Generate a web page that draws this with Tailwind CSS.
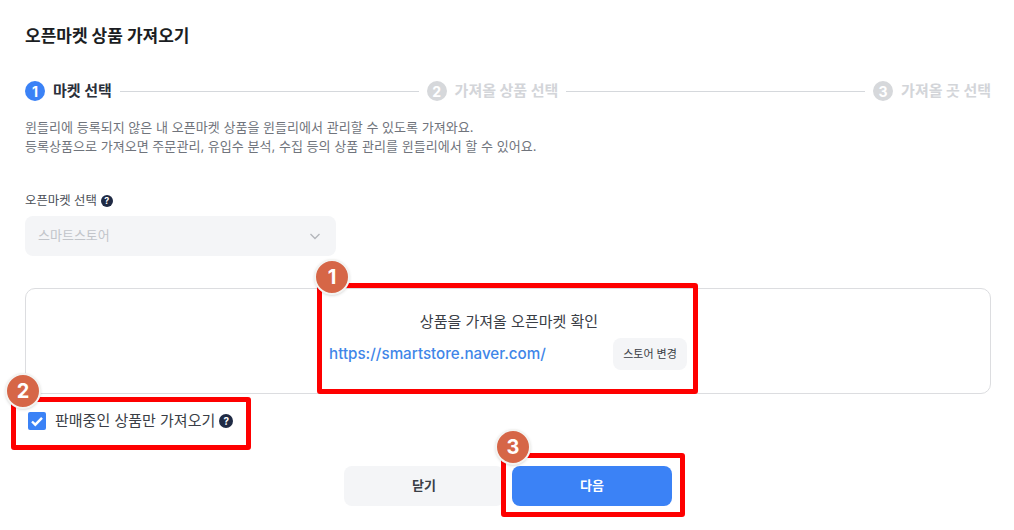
<!DOCTYPE html>
<html lang="ko">
<head>
  <meta charset="UTF-8" />
  <title>오픈마켓 상품 가져오기</title>
  <script src="https://cdn.jsdelivr.net/npm/@tailwindcss/browser@4"></script>
</head>
<body class="bg-white font-['Inter','Noto_Sans_CJK_KR',sans-serif] overflow-hidden">
  <div class="relative w-[1014px] h-[530px] px-[25px] pt-[26px]">
    <h1 class="text-[17px] leading-[20px] font-bold text-[#1b1d22]">오픈마켓 상품 가져오기</h1>

    <!-- stepper -->
    <div class="flex items-center mt-[35px] -mr-[2px] h-[20px] text-[15px] font-bold text-[#d3d5d9]">
      <span class="w-[20px] h-[20px] rounded-full bg-[#3b82f6] text-white text-[14px] flex items-center justify-center">1</span>
      <span class="ml-[8px] text-[#2b303b]">마켓 선택</span>
      <span class="flex-1 h-px bg-[#d5d8dc] mx-[8px]"></span>
      <span class="w-[20px] h-[20px] rounded-full bg-[#d6d8db] text-white text-[14px] flex items-center justify-center">2</span>
      <span class="ml-[8px]">가져올 상품 선택</span>
      <span class="flex-1 h-px bg-[#d5d8dc] mx-[8px]"></span>
      <span class="w-[20px] h-[20px] rounded-full bg-[#d6d8db] text-white text-[14px] flex items-center justify-center">3</span>
      <span class="ml-[8px]">가져올 곳 선택</span>
    </div>

    <p class="mt-[17px] text-[13.050px] leading-[19px] text-[#70747c]">윈들리에 등록되지 않은 내 오픈마켓 상품을 윈들리에서 관리할 수 있도록 가져와요.<br />등록상품으로 가져오면 주문관리, 유입수 분석, 수집 등의 상품 관리를 윈들리에서 할 수 있어요.</p>

    <!-- market select -->
    <div class="flex items-center gap-[4px] mt-[36px] h-[18px] text-[12.400px] text-[#4b4f57]">
      오픈마켓 선택
      <span class="w-[12px] h-[12px] rounded-full bg-[#1f2a44] text-white text-[9px] font-bold flex items-center justify-center">?</span>
    </div>
    <div class="flex items-center justify-between w-[311px] h-[40px] mt-[6px] px-[13px] rounded-[8px] bg-[#f4f5f7] text-[13px] text-[#c2c5ca]">
      스마트스토어
      <svg class="w-[12px] h-[12px] mr-[2px]" viewBox="0 0 12 12" fill="none" stroke="#b4b7bc" stroke-width="1.4"><path d="M1.5 4l4.500 4.500L10.500 4" /></svg>
    </div>

    <!-- store box -->
    <div class="w-[966px] h-[106px] mt-[32px] border border-[#dcdde0] rounded-[10px] pl-[303px] pt-[23px]">
      <div class="w-[365px]">
        <p class="text-center text-[15px] leading-[20px] text-[#3a3e46] pr-[5px]">상품을 가져올 오픈마켓 확인</p>
        <div class="flex items-center justify-between mt-[6px] pr-[7px]">
          <a class="text-[15.200px] text-[#3f86e8] font-medium">https://smartstore.naver.com/</a>
          <span class="flex items-center justify-center w-[74px] h-[32px] rounded-[8px] bg-[#f4f5f7] text-[11px] text-[#3a3e46]">스토어 변경</span>
        </div>
      </div>
    </div>

    <!-- checkbox -->
    <div class="flex items-center mt-[17px] ml-[3px] h-[20px] text-[15px] text-[#3a3e46]">
      <span class="w-[18px] h-[18px] rounded-[2px] bg-[#3b82f6] flex items-center justify-center">
        <svg class="w-[14px] h-[14px]" viewBox="0 0 14 14" fill="none" stroke="white" stroke-width="2.400"><path d="M2 7.500l3.300 3.200L12 3.800" /></svg>
      </span>
      <span class="ml-[9px]">판매중인 상품만 가져오기</span>
      <span class="ml-[4px] w-[14px] h-[14px] rounded-full bg-[#1f2a44] text-white text-[10px] font-bold flex items-center justify-center">?</span>
    </div>

    <!-- buttons -->
    <div class="flex gap-[8px] ml-[319px] mt-[35px]">
      <button class="w-[160px] h-[40px] rounded-[8px] bg-[#f4f5f7] text-[13px] font-semibold text-[#3a3e46]">닫기</button>
      <button class="w-[160px] h-[40px] rounded-[8px] bg-[#3b82f6] text-[13px] font-bold text-white">다음</button>
    </div>

    <!-- annotations -->
    <div class="absolute left-[317px] top-[283px] w-[381px] h-[111px] border-[5px] border-[#fe0000] rounded-[3px]"></div>
    <div class="absolute left-[11px] top-[397px] w-[240px] h-[53px] border-[5px] border-[#fe0000] rounded-[3px]"></div>
    <div class="absolute left-[501px] top-[453px] w-[184px] h-[64px] border-[5px] border-[#fe0000] rounded-[3px]"></div>
    <div class="absolute left-[314px] top-[259px] w-[36px] h-[36px] rounded-full bg-[#d66647] border-2 border-[#f4f4f2] shadow-sm text-white text-[20px] font-bold flex items-center justify-center">1</div>
    <div class="absolute left-[5px] top-[373px] w-[36px] h-[36px] rounded-full bg-[#d66647] border-2 border-[#f4f4f2] shadow-sm text-white text-[20px] font-bold flex items-center justify-center">2</div>
    <div class="absolute left-[495px] top-[429px] w-[36px] h-[36px] rounded-full bg-[#d66647] border-2 border-[#f4f4f2] shadow-sm text-white text-[20px] font-bold flex items-center justify-center">3</div>
  </div>
</body>
</html>
